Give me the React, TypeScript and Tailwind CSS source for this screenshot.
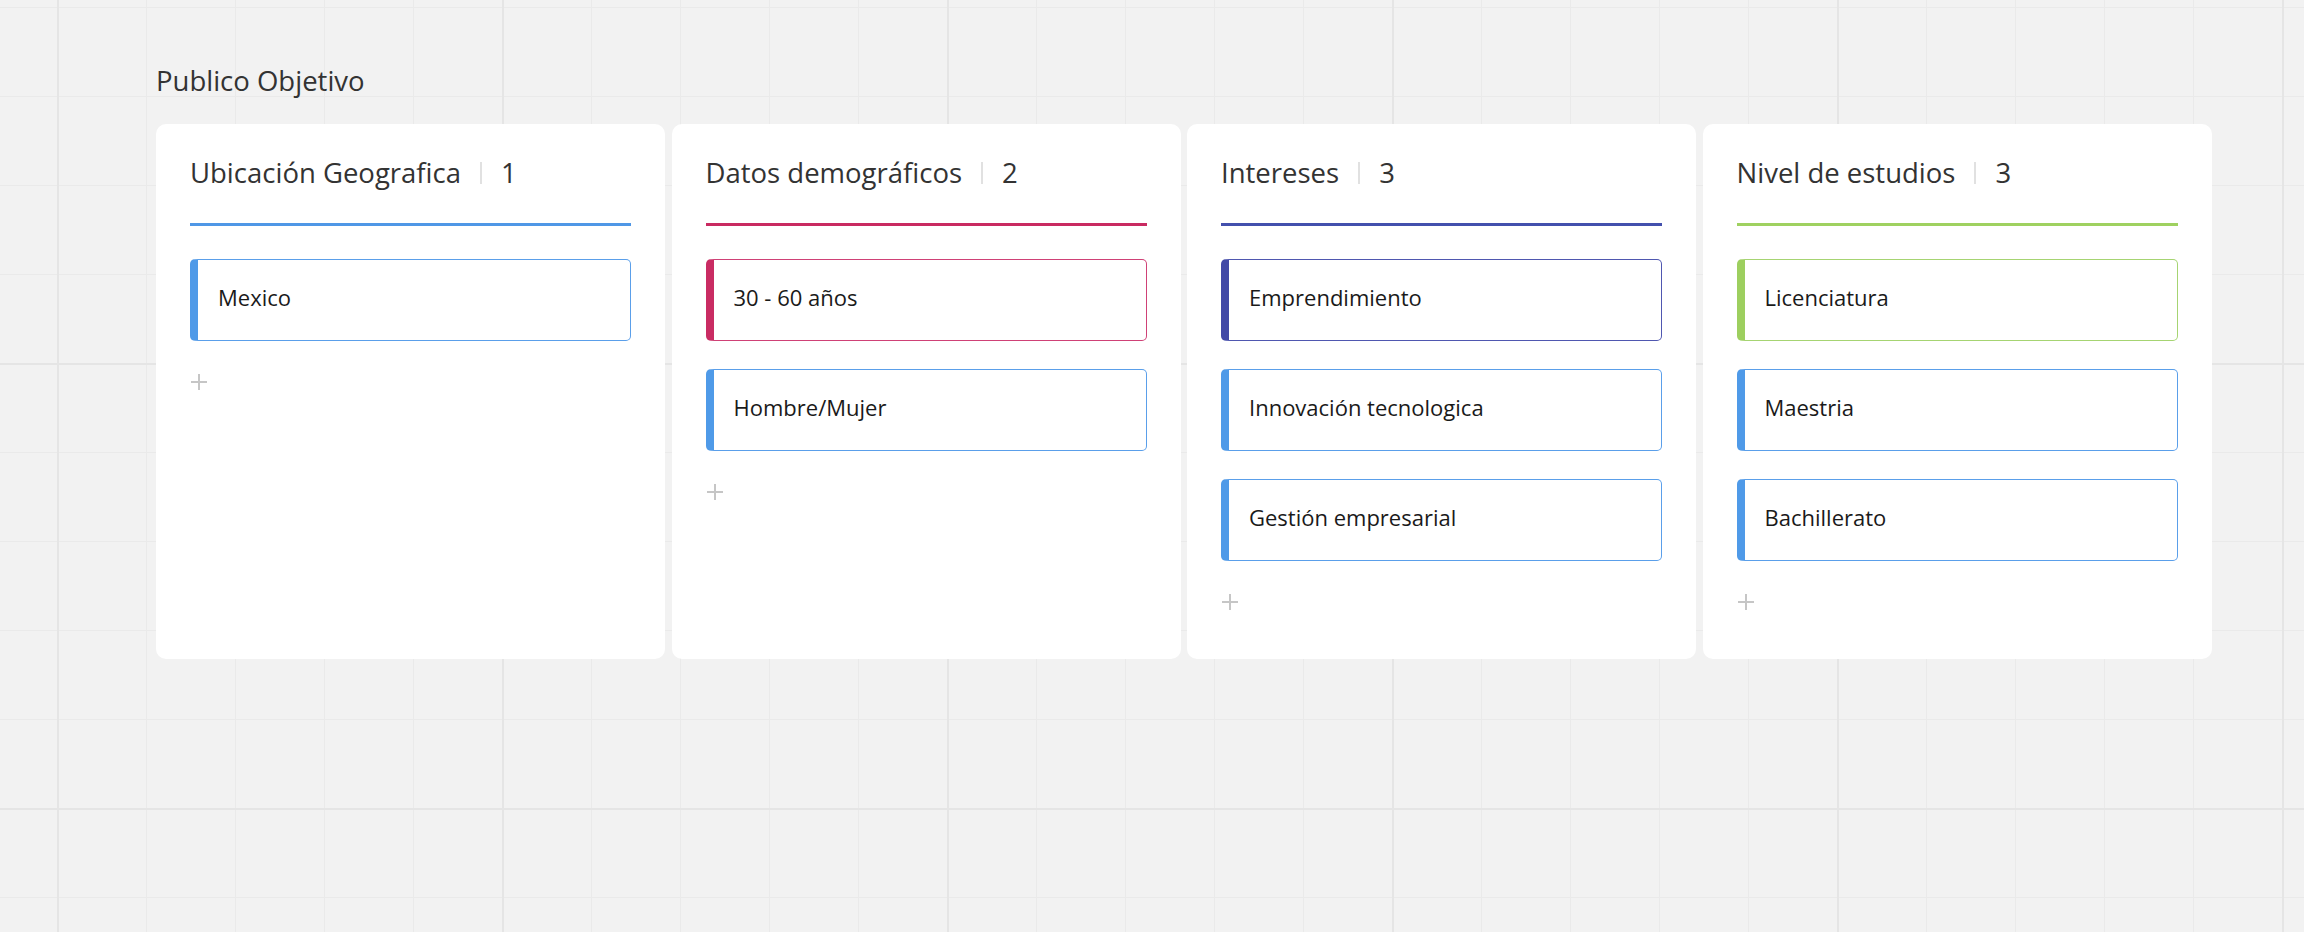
type Item = { label: string; accent: string }

type Column = {
  title: string
  line: string
  items: Item[]
}

// accent + border colour pairs for the sticky cards
const BLUE = 'border-[#5a9fea] border-l-[#4f9ae8]'
const PINK = 'border-[#cf4176] border-l-[#c92c63]'
const INDIGO = 'border-[#4f57b0] border-l-[#4249a6]'
const GREEN = 'border-[#a6d472] border-l-[#9dcf5f]'

const COLUMNS: Column[] = [
  {
    title: 'Ubicación Geografica',
    line: 'bg-[#4f97e6]',
    items: [{ label: 'Mexico', accent: BLUE }],
  },
  {
    title: 'Datos demográficos',
    line: 'bg-[#c92a61]',
    items: [
      { label: '30 - 60 años', accent: PINK },
      { label: 'Hombre/Mujer', accent: BLUE },
    ],
  },
  {
    title: 'Intereses',
    line: 'bg-[#4350ad]',
    items: [
      { label: 'Emprendimiento', accent: INDIGO },
      { label: 'Innovación tecnologica', accent: BLUE },
      { label: 'Gestión empresarial', accent: BLUE },
    ],
  },
  {
    title: 'Nivel de estudios',
    line: 'bg-[#9fd160]',
    items: [
      { label: 'Licenciatura', accent: GREEN },
      { label: 'Maestria', accent: BLUE },
      { label: 'Bachillerato', accent: BLUE },
    ],
  },
]

function PlusIcon() {
  return (
    <svg width="16" height="16" viewBox="0 0 16 16" className="text-[#c6c6c6]">
      <path d="M8 0v16M0 8h16" stroke="currentColor" strokeWidth="2" />
    </svg>
  )
}

function KanbanColumn({ column }: { column: Column }) {
  return (
    <div className="w-[509px] shrink-0 flex flex-col bg-white rounded-[10px] px-[34px] pt-[30px] pb-[49px]">
      {/* Header: title | count */}
      <div className="flex items-center h-[38px] leading-[38px] text-[27.5px] text-[#333333]">
        <span>{column.title}</span>
        <span className="w-[2px] h-[22px] bg-[#e1e1e1] ml-[19px] mr-[19px]" />
        <span>{column.items.length}</span>
      </div>

      <div className={`h-[3px] mt-[31px] ${column.line}`} />

      {/* Cards */}
      <div className="flex flex-col gap-[28px] mt-[33px]">
        {column.items.map((item) => (
          <div
            key={item.label}
            className={`h-[82px] flex items-center bg-white border border-l-[8px] rounded-[5px] pl-[20px] pb-[5px] text-[22px] text-[#1a1a1a] ${item.accent}`}
          >
            {item.label}
          </div>
        ))}
      </div>

      <div className="mt-[33px] ml-px">
        <PlusIcon />
      </div>
    </div>
  )
}

export default function App() {
  return (
    <div
      className="min-h-screen w-full bg-[#f2f2f2] font-['Open_Sans',sans-serif] bg-[linear-gradient(to_right,#e5e5e5_2px,transparent_2px),linear-gradient(to_bottom,#e5e5e5_2px,transparent_2px),linear-gradient(to_right,#eaeaea_1px,transparent_1px),linear-gradient(to_bottom,#eaeaea_1px,transparent_1px)] bg-[size:445px_445px,445px_445px,89px_89px,89px_89px] bg-[position:57px_363px,57px_363px,57px_7px,57px_7px]"
    >
      <div className="pl-[156px] pt-[62px]">
        {/* Board frame title */}
        <div className="h-[38px] leading-[38px] text-[27.5px] text-[#333333]">Publico Objetivo</div>

        <div className="flex items-stretch gap-[6.5px] mt-[24px]">
          {COLUMNS.map((column) => (
            <KanbanColumn key={column.title} column={column} />
          ))}
        </div>
      </div>
    </div>
  )
}
